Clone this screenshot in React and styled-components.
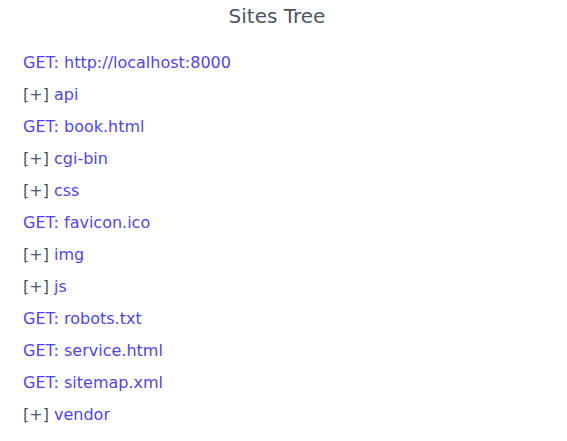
import React from 'react';
import styled, {createGlobalStyle} from 'styled-components';

const Global = createGlobalStyle`
  body {
    margin: 0;
    background: #ffffff;
    font-family: "DejaVu Sans", sans-serif;
  }
`;

const Wrapper = styled.div`
  padding: 4px 36px 0 23px;
`;

const Title = styled.h2`
  margin: 0 0 23px 0;
  text-align: center;
  font-size: 20px;
  font-weight: normal;
  line-height: 24px;
  color: #4b5563;
`;

const List = styled.ul`
  list-style: none;
  margin: 0;
  padding: 0;
  display: flex;
  flex-direction: column;
  gap: 8px;
`;

const Item = styled.li`
  font-size: 16px;
  line-height: 24px;
  color: #4b5563;
`;

const Link = styled.a`
  color: #4f46e5;
  text-decoration: none;
  cursor: pointer;
`;

const entries = [
  {type: 'get', name: 'http://localhost:8000'},
  {type: 'dir', name: 'api'},
  {type: 'get', name: 'book.html'},
  {type: 'dir', name: 'cgi-bin'},
  {type: 'dir', name: 'css'},
  {type: 'get', name: 'favicon.ico'},
  {type: 'dir', name: 'img'},
  {type: 'dir', name: 'js'},
  {type: 'get', name: 'robots.txt'},
  {type: 'get', name: 'service.html'},
  {type: 'get', name: 'sitemap.xml'},
  {type: 'dir', name: 'vendor'},
];

export default function App () {
  return (
    <Wrapper>
      <Global />
      <Title>Sites Tree</Title>
      <List>
        {entries.map(e => (
          <Item key={e.name}>
            {e.type === 'dir'
              ? <>[+] <Link>{e.name}</Link></>
              : <Link>GET: {e.name}</Link>}
          </Item>
        ))}
      </List>
    </Wrapper>
  );
}
